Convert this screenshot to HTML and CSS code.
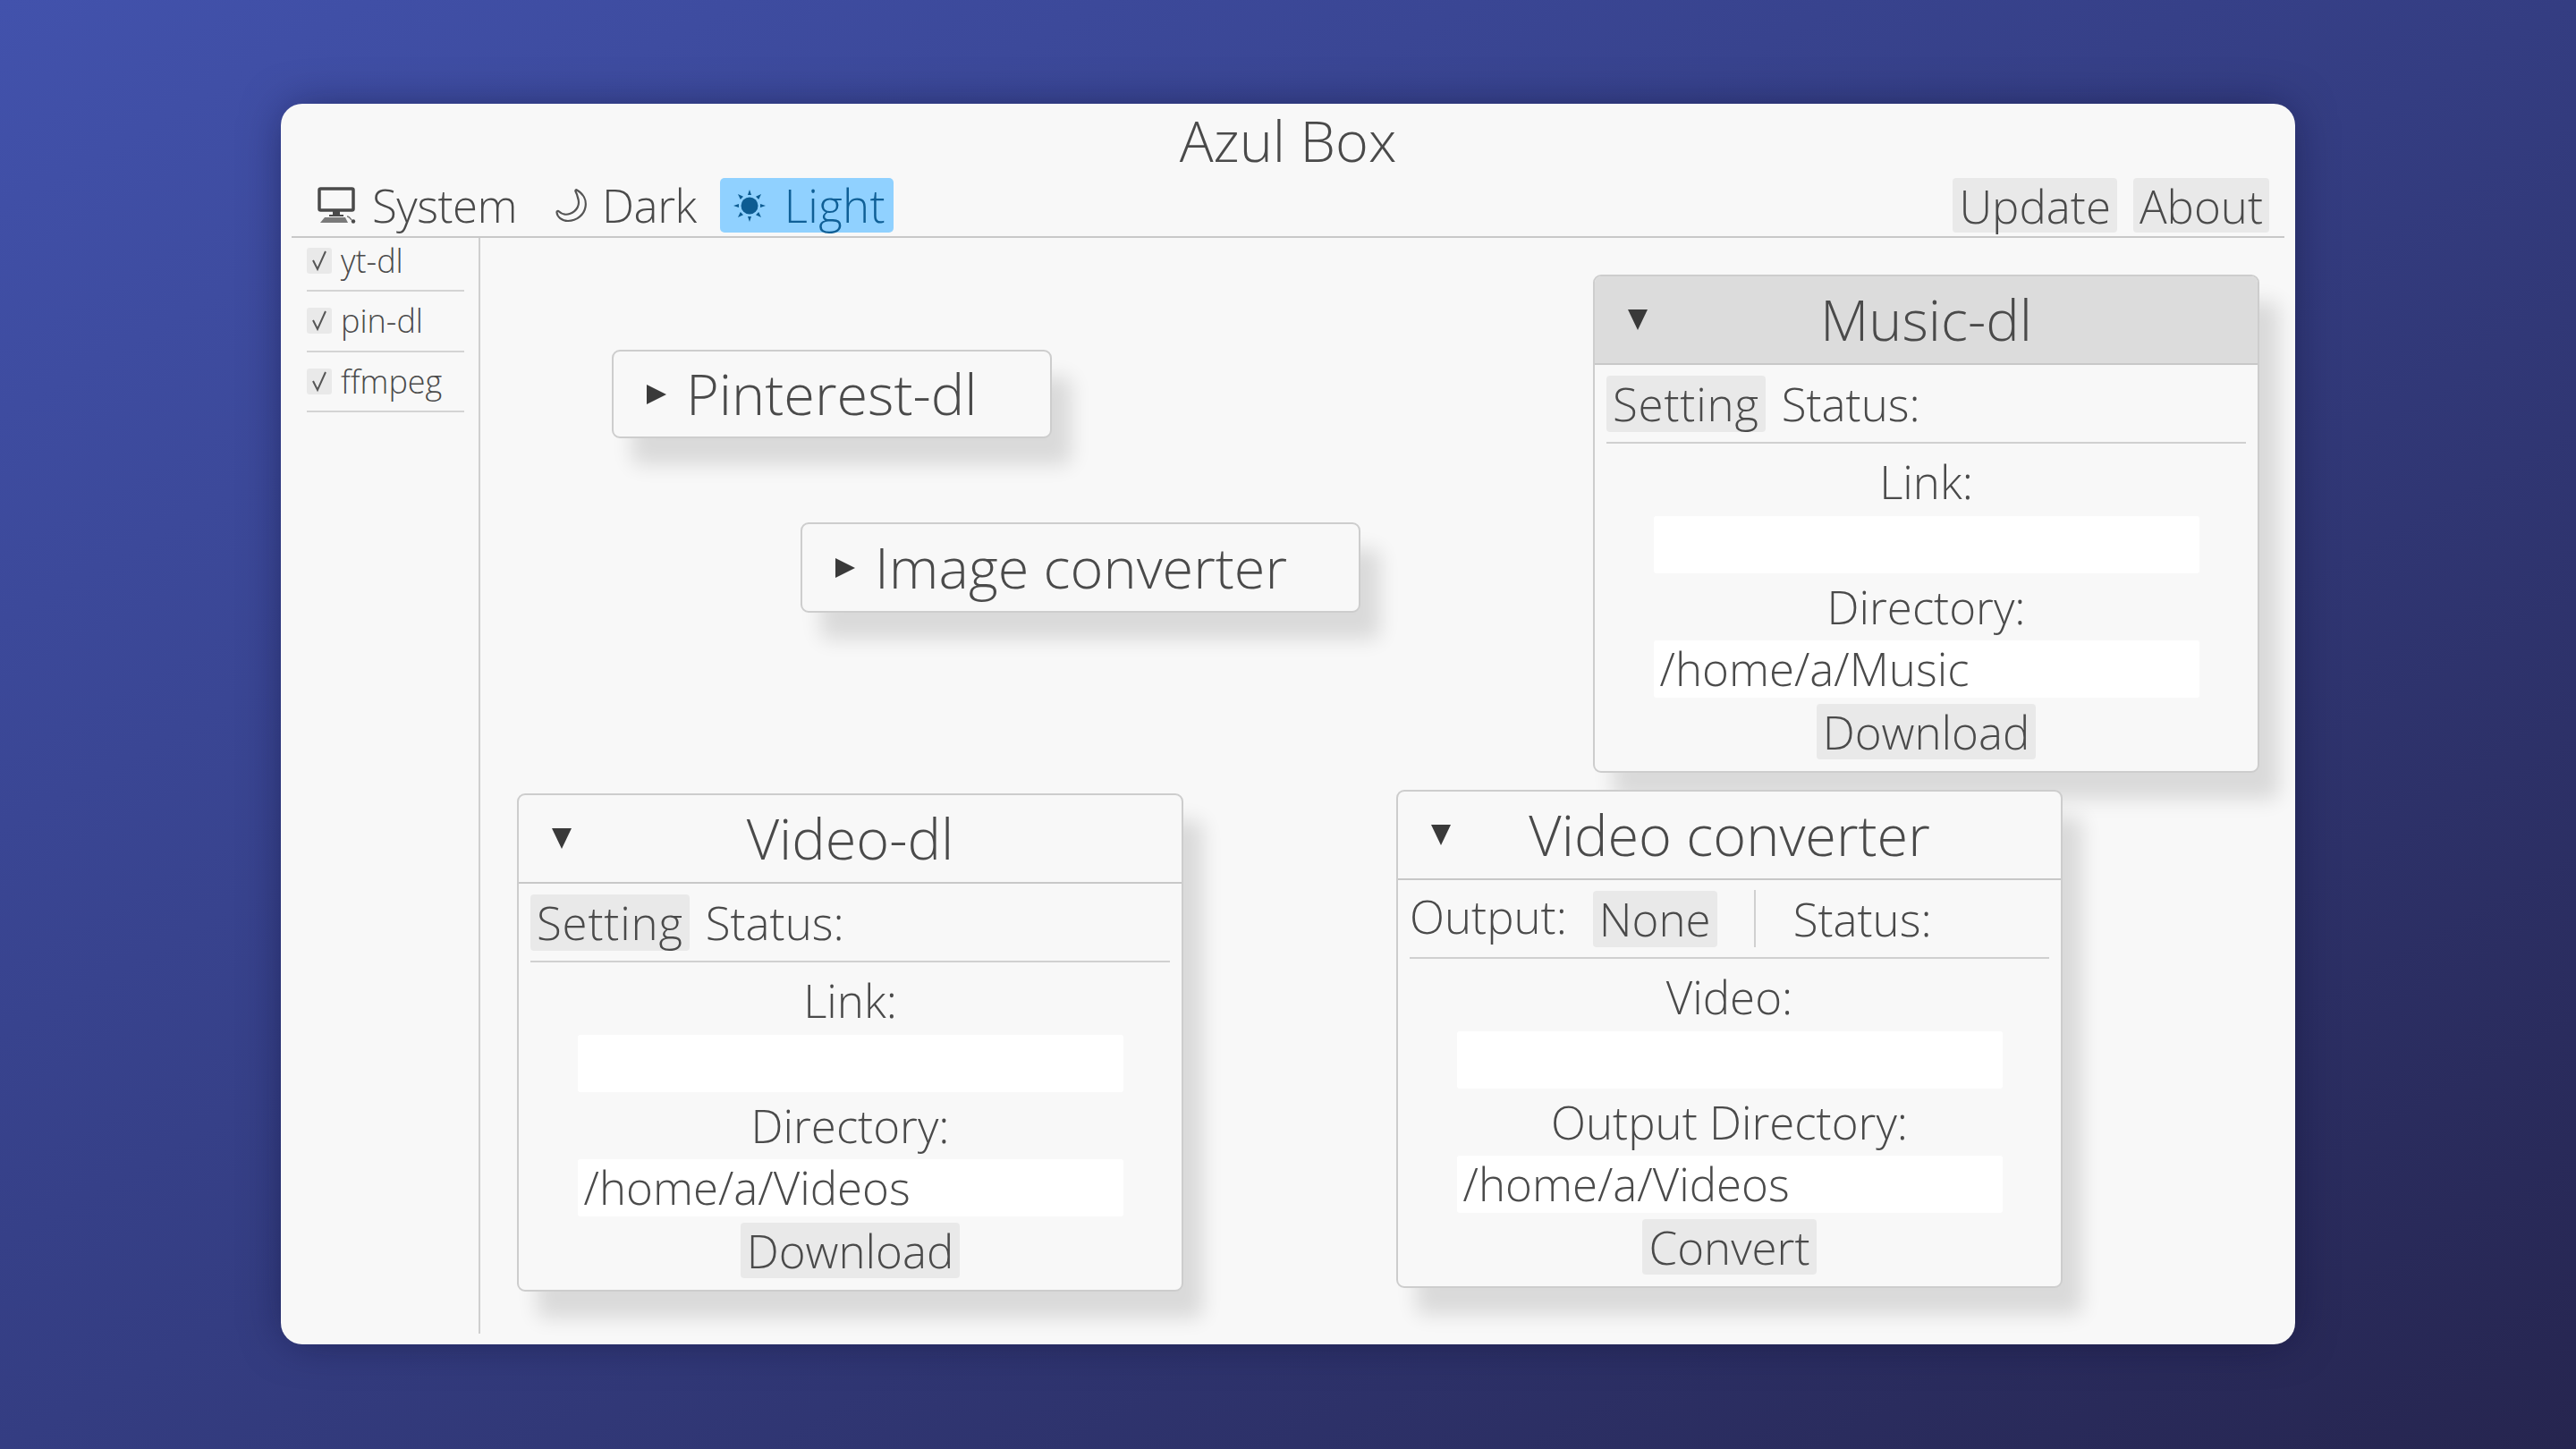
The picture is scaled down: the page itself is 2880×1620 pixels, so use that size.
FILE: index.html
```html
<!DOCTYPE html>
<html lang="en">
<head>
<meta charset="utf-8">
<title>Azul Box</title>
<link rel="stylesheet" href="styles.css">
</head>
<body>
<main class="window">
  <h1 class="title">Azul Box</h1>
  <nav class="toolbar">
    <span class="mode mode-system">
      <svg class="ico ico-system" viewBox="0 0 44 42"><rect x="2" y="2" width="38" height="24" rx="1.5" fill="none" stroke="#4a4a4a" stroke-width="3.5"/><path d="M17 27h8v4h-8z" fill="#4a4a4a"/><path d="M13 31h16v2H13z" fill="#4a4a4a"/><path d="M8 34h23l3 6H3z" fill="#7a7a7a"/><circle cx="40" cy="38.500" r="2.200" fill="#4a4a4a"/><path d="M33 33c2 0 3 1 5 4" fill="none" stroke="#777" stroke-width="1.500"/></svg>
      System
    </span>
    <span class="mode mode-dark">
      <svg class="ico ico-moon" viewBox="0 0 38 38"><path d="M24 1.500c7 4 11 11 9.500 19C32 29 24 36 14 36 7 36 2 31.500 1.500 26.500 1.300 25 3 24.500 4 25.500c3 3 8 4 12 2.500 8-3 12-10 9-18C24.500 7 23.500 5 22.500 3c-.5-1.200.5-2.200 1.500-1.500z" fill="none" stroke="#555" stroke-width="2.200" stroke-linejoin="round"/></svg>
      Dark
    </span>
    <span class="mode mode-light">
      <svg class="ico ico-sun" viewBox="0 0 36 36"><circle cx="18" cy="18" r="9.500" fill="#0d5c92"/><g fill="#0d5c92"><path d="M18 0l2 6h-4z"/><path d="M18 36l-2-6h4z"/><path d="M0 18l6-2v4z"/><path d="M36 18l-6 2v-4z"/><path d="M5 5l6 2.800-3.200 3.200z"/><path d="M31 5l-2.800 6L25 7.800z"/><path d="M5 31l2.800-6 3.200 3.200z"/><path d="M31 31l-6-2.800 3.200-3.200z"/></g></svg>
      Light
    </span>
    <span class="actions">
      <button class="btn" type="button">Update</button>
      <button class="btn" type="button">About</button>
    </span>
  </nav>
  <div class="workspace">
    <aside class="sidebar">
      <label class="tool"><span class="check"><svg viewBox="0 0 28 28"><path d="M7 14l5 10L21 4" fill="none" stroke="#555" stroke-width="2"/></svg></span>yt-dl</label>
      <label class="tool"><span class="check"><svg viewBox="0 0 28 28"><path d="M7 14l5 10L21 4" fill="none" stroke="#555" stroke-width="2"/></svg></span>pin-dl</label>
      <label class="tool"><span class="check"><svg viewBox="0 0 28 28"><path d="M7 14l5 10L21 4" fill="none" stroke="#555" stroke-width="2"/></svg></span>ffmpeg</label>
    </aside>
    <section class="canvas">

      <div class="card collapsed pos-pinterest">
        <svg class="tri-right" viewBox="0 0 22 22"><path d="M0 0l22 11L0 22z"/></svg>
        <span class="heading">Pinterest-dl</span>
      </div>

      <div class="card collapsed pos-image">
        <svg class="tri-right" viewBox="0 0 22 22"><path d="M0 0l22 11L0 22z"/></svg>
        <span class="heading">Image converter</span>
      </div>

      <div class="card pos-music">
        <header class="card-head is-hover"><svg class="tri-down" viewBox="0 0 22 23"><path d="M0 0h22L11 23z"/></svg><span class="heading">Music-dl</span></header>
        <div class="card-row"><button class="btn btn-setting" type="button">Setting</button><span class="status">Status:</span></div>
        <div class="card-body">
          <div class="label label-first">Link:</div>
          <div class="field"></div>
          <div class="label">Directory:</div>
          <div class="field field-short">/home/a/Music</div>
          <button class="btn" type="button">Download</button>
        </div>
      </div>

      <div class="card pos-video">
        <header class="card-head"><svg class="tri-down" viewBox="0 0 22 23"><path d="M0 0h22L11 23z"/></svg><span class="heading">Video-dl</span></header>
        <div class="card-row"><button class="btn btn-setting" type="button">Setting</button><span class="status">Status:</span></div>
        <div class="card-body">
          <div class="label label-first">Link:</div>
          <div class="field"></div>
          <div class="label">Directory:</div>
          <div class="field field-short">/home/a/Videos</div>
          <button class="btn" type="button">Download</button>
        </div>
      </div>

      <div class="card pos-convert">
        <header class="card-head"><svg class="tri-down" viewBox="0 0 22 23"><path d="M0 0h22L11 23z"/></svg><span class="heading">Video converter</span></header>
        <div class="card-row">
          <span class="output">Output:</span>
          <button class="btn" type="button">None</button>
          <span class="vsep"></span>
          <span class="status status-far">Status:</span>
        </div>
        <div class="card-body">
          <div class="label label-first">Video:</div>
          <div class="field"></div>
          <div class="label">Output Directory:</div>
          <div class="field field-short">/home/a/Videos</div>
          <button class="btn" type="button">Convert</button>
        </div>
      </div>

    </section>
  </div>
</main>
</body>
</html>
```
FILE: styles.css
```css
* { box-sizing: border-box; }
html, body { margin: 0; height: 100%; }
body {
  width: 2880px;
  height: 1620px;
  padding: 116px 314px 117px;
  overflow: hidden;
  font-family: "Open Sans", "Noto Sans", sans-serif;
  font-weight: 300;
  font-size: 51px;
  color: #4a4a4a;
  background: linear-gradient(to bottom right, #4252ac 0%, #343d82 50%, #26254f 100%);
}
.window {
  width: 2252px;
  height: 1387px;
  display: flex;
  flex-direction: column;
  background: #f8f8f8;
  border-radius: 24px;
  box-shadow: 0 0 50px -8px rgba(10, 10, 40, .55);
}
.title {
  margin: 0 0 2px;
  height: 81px;
  line-height: 81px;
  text-align: center;
  font-size: 63px;
  font-weight: 300;
}
.toolbar {
  height: 67px;
  margin: 0 12px;
  padding-bottom: 4px;
  display: flex;
  align-items: stretch;
  border-bottom: 2px solid #c8c8c8;
}
.mode {
  display: flex;
  align-items: center;
  line-height: 1;
  border-radius: 5px;
}
.mode-system, .mode-dark { letter-spacing: -.5px; }
.ico { flex: none; }
.ico-system { width: 44px; height: 42px; margin: 0 17px 0 29px; }
.ico-moon { width: 38px; height: 38px; margin: 0 14px 0 43px; }
.ico-sun { width: 36px; height: 36px; margin: 0 21px 0 15px; }
.mode-light {
  margin-left: 26px;
  padding-right: 9px;
  background: #90d1ff;
  color: #0f5f96;
  letter-spacing: .4px;
}
.actions { margin-left: auto; margin-right: 17px; display: flex; gap: 18px; }
.btn {
  display: block;
  margin: 0;
  padding: 0 7px;
  border: 0;
  border-radius: 4px;
  background: #e9e9e9;
  color: inherit;
  font: inherit;
  line-height: 62px;
}
.btn-setting { letter-spacing: .8px; }
.workspace { flex: 1; display: flex; min-height: 0; margin-bottom: 12px; }
.sidebar {
  width: 211px;
  margin-left: 12px;
  padding: 0 16px 0 17px;
  border-right: 2px solid #cfcfcf;
  font-size: 36px;
}
.tool {
  display: flex;
  align-items: center;
  gap: 10px;
  height: 60px;
  margin-bottom: 7.500px;
  padding-bottom: 8px;
  border-bottom: 2px solid #d4d4d4;
}
.check {
  width: 28px;
  height: 29px;
  background: #e9e9e9;
  border-radius: 3px;
  flex: none;
}
.check svg { display: block; width: 28px; height: 28px; }
.canvas { flex: 1; position: relative; }

.card {
  position: absolute;
  width: 745px;
  height: 557px;
  background: #f8f8f8;
  border: 2px solid #cdcdcd;
  border-radius: 9px;
  box-shadow: 22px 30px 22px rgba(0, 0, 0, .12);
}
.pos-pinterest { left: 147px; top: 125px; width: 492px; height: 99px; }
.pos-image { left: 358px; top: 318px; width: 626px; height: 101px; }
.pos-music { left: 1244px; top: 41px; }
.pos-video { left: 41px; top: 621px; }
.pos-convert { left: 1024px; top: 617px; }

.collapsed { display: flex; align-items: center; padding-left: 37px; gap: 22px; }
.tri-right { width: 22px; height: 22px; fill: #3a3a3a; flex: none; }
.tri-down { width: 22px; height: 23px; fill: #3a3a3a; justify-self: start; margin-left: 37px; }
.heading { font-size: 63px; line-height: 1; position: relative; top: -1px; }

.card-head {
  height: 99px;
  display: grid;
  grid-template-columns: 1fr auto 1fr;
  align-items: center;
  border-bottom: 2px solid #c8c8c8;
  border-radius: 7px 7px 0 0;
}
.card-head.is-hover { background: #dcdcdc; }
.card-row {
  height: 88px;
  margin: 0 13px;
  padding: 12px 0;
  display: flex;
  align-items: center;
  gap: 18px;
  border-bottom: 2px solid #d0d0d0;
}
.card-row .btn { height: 63px; }
.output { margin: -6px 11px 0 0; }
.vsep { width: 2px; height: 64px; margin: 0 8px 0 23px; background: #d0d0d0; }
.status-far { margin-left: 16px; }
.card-body { display: flex; flex-direction: column; align-items: center; }
.label { height: 64px; line-height: 62px; margin: 6px 0 5px; text-align: center; }
.label-first { margin: 10px 0 7px; line-height: 64px; }
.field {
  width: 610px;
  height: 64px;
  background: #fff;
  border-radius: 3px;
  padding-left: 7px;
  line-height: 62px;
}
.field-short { margin-bottom: 7px; }
```
